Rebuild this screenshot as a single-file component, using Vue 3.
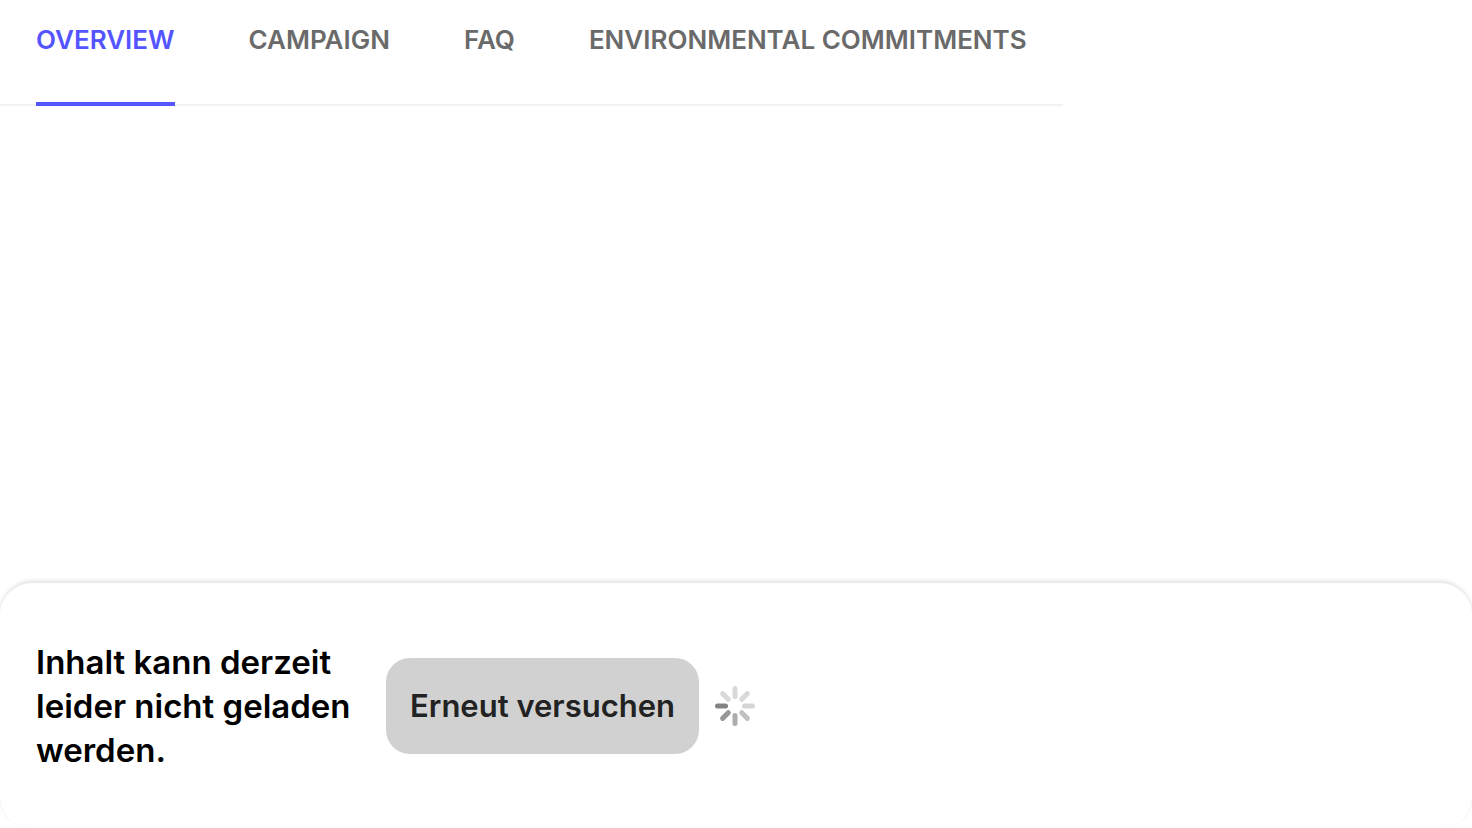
<script setup>
import { ref } from 'vue'

const tabs = ['Overview', 'Campaign', 'FAQ', 'Environmental commitments']
const active = ref('Overview')
const spokes = [
  { angle: 0, color: '#d9d9d9' },
  { angle: 45, color: '#d9d9d9' },
  { angle: 90, color: '#d6d6d6' },
  { angle: 135, color: '#c1c1c1' },
  { angle: 180, color: '#adadad' },
  { angle: 225, color: '#989898' },
  { angle: 270, color: '#838383' },
  { angle: 315, color: '#d9d9d9' }
]
</script>

<template>
  <main class="page">
    <nav class="tabs">
      <a
        v-for="tab in tabs"
        :key="tab"
        href="#"
        class="tab"
        :class="{ active: tab === active }"
        @click.prevent="active = tab"
      >{{ tab }}</a>
    </nav>
    <section class="panel">
      <p class="message">Inhalt kann derzeit leider nicht geladen werden.</p>
      <button type="button" class="retry">Erneut versuchen</button>
      <svg class="spinner" viewBox="0 0 40 40" aria-hidden="true">
        <line
          v-for="s in spokes"
          :key="s.angle"
          x1="20" y1="2.5" x2="20" y2="10.5"
          :stroke="s.color"
          stroke-width="5"
          stroke-linecap="round"
          :transform="`rotate(${s.angle} 20 20)`"
        />
      </svg>
    </section>
  </main>
</template>

<style>
body {
  background: #fff;
}
</style>

<style scoped>
.page {
  display: flex;
  flex-direction: column;
  justify-content: space-between;
  min-height: 100vh;
  font-family: Inter, "Liberation Sans", sans-serif;
}
.tabs {
  display: flex;
  align-self: flex-start;
  gap: 74px;
  padding: 0 36px;
  border-bottom: 2px solid #f2f2f2;
}
.tab {
  padding: 24px 0 46px;
  margin-bottom: -2px;
  border-bottom: 4px solid transparent;
  color: #6a6a6a;
  font-size: 26px;
  font-weight: 600;
  line-height: 32px;
  text-decoration: none;
  text-transform: uppercase;
  white-space: nowrap;
}
.tab.active {
  color: #5555ff;
  border-color: #5555ff;
}
.panel {
  display: flex;
  align-items: center;
  box-sizing: border-box;
  min-height: 245px;
  padding: 56px 36px;
  border-radius: 32px;
  background: #fff;
  box-shadow: 0 -2px 4px rgba(0, 0, 0, 0.12);
}
.message {
  width: 326px;
  margin: 0 24px 0 0;
  color: #000;
  font-size: 33px;
  font-weight: 600;
  line-height: 44px;
}
.retry {
  padding: 26px 24px;
  border: 0;
  border-radius: 24px;
  background: #d1d1d1;
  color: #222;
  font: inherit;
  font-size: 31px;
  font-weight: 600;
  line-height: 44px;
  white-space: nowrap;
}
.spinner {
  width: 40px;
  height: 40px;
  margin-left: 16px;
}
</style>
